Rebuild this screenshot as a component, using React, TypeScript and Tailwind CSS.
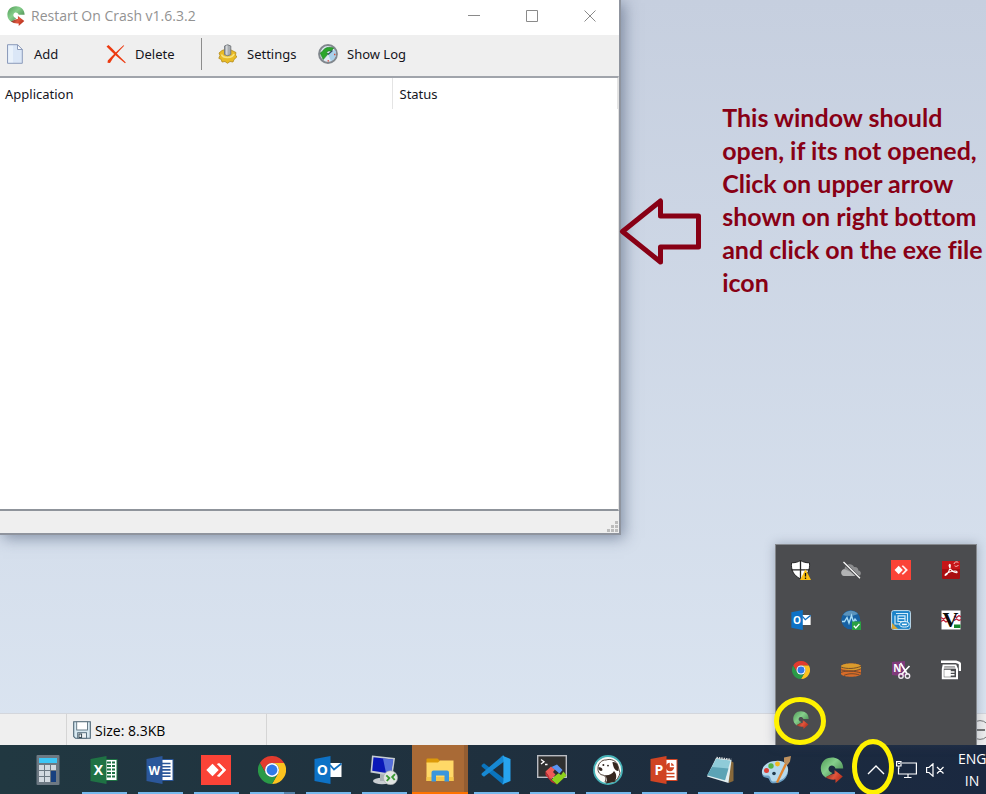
import React from "react";

type IconProps = { size?: number };

const sans = "font-['Open_Sans','Noto_Sans',sans-serif]";
const tahoma = "font-['Noto_Sans','Open_Sans',sans-serif]";

function RestartIcon({ size = 20 }: IconProps) {
  return (
    <svg width={size} height={size} viewBox="0 0 26 26" aria-hidden="true">
      <defs>
        <linearGradient id="rg" x1="0" y1="0" x2="1" y2="0.9">
          <stop offset="0" stopColor="#4f9a55" />
          <stop offset="0.45" stopColor="#86cf8c" />
          <stop offset="1" stopColor="#3b7d44" />
        </linearGradient>
        <linearGradient id="rr" x1="0" y1="0" x2="1" y2="0.5">
          <stop offset="0" stopColor="#4d2a20" />
          <stop offset="0.6" stopColor="#e2553c" />
          <stop offset="1" stopColor="#b8321e" />
        </linearGradient>
      </defs>
      <path d="M24.2 11.5 C24.2 4.5 19 0.4 13 0.4 C6 0.4 1.8 5.5 1.8 11.5 C1.8 15.5 3.8 18.8 7 20.8 L13.5 16 C10 14.8 9 12.6 9.8 10.6 C10.8 8 15 7.6 16.5 11.5 Z" fill="url(#rg)" />
      <path d="M6.5 20.2 C9.5 18.5 12.5 17 15.5 16.8 V13 L23.8 19.6 L16.5 26 V22.6 C12 23 9 22 6.5 20.2 Z" fill="url(#rr)" />
    </svg>
  );
}

function ChromeIcon({ size = 28 }: IconProps) {
  const sector = "M3.2 12 A24 24 0 0 1 44.8 12 H24 A12 12 0 0 0 13.6 30 Z";
  return (
    <svg width={size} height={size} viewBox="0 0 48 48" aria-hidden="true">
      <path d={sector} fill="#e23b2e" />
      <path d={sector} fill="#fcc31e" transform="rotate(120 24 24)" />
      <path d={sector} fill="#2a9a47" transform="rotate(240 24 24)" />
      <circle cx="24" cy="24" r="12" fill="#fff" />
      <circle cx="24" cy="24" r="9.3" fill="#3079e8" />
    </svg>
  );
}

function AnyDeskIcon({ size = 30 }: IconProps) {
  return (
    <svg width={size} height={size} viewBox="0 0 30 30" aria-hidden="true">
      <rect width="30" height="30" fill="#fb4337" />
      <path d="M11.5 8.8 L17.7 15 L11.5 21.2 L5.3 15 Z" fill="#fff" />
      <path d="M16.4 9 L18.4 8.6 L24.8 15 L18.4 21.4 L16.4 21 L22 15 Z" fill="#fff" stroke="#fff" strokeWidth="0.8" />
    </svg>
  );
}

function OutlookIcon({ size = 28 }: IconProps) {
  return (
    <svg width={size} height={size} viewBox="0 0 28 28" aria-hidden="true">
      <path d="M15 7 H27.5 V21 H15 Z" fill="#fff" />
      <path d="M16 9 L20 13.5 L27.5 7.5" fill="none" stroke="#0f6fc2" strokeWidth="1.8" />
      <path d="M0.5 3 L16.5 0 V28 L0.5 25 Z" fill="#0d72c6" />
      <text x="8.3" y="19.2" fontSize="14" fontWeight="700" fill="#fff" textAnchor="middle" fontFamily="Open Sans, sans-serif">O</text>
    </svg>
  );
}

function CalculatorIcon() {
  return (
    <svg width="24" height="30" viewBox="0 0 24 30" aria-hidden="true">
      <rect x="0.5" width="23" height="30" rx="1" fill="#6d7983" />
      <rect x="3" y="3" width="18" height="5" fill="#3dc6f5" />
      <g fill="#d3dae1">
        <rect x="3" y="10" width="5" height="5" /><rect x="9" y="10" width="5" height="5" /><rect x="15" y="10" width="5" height="5" />
        <rect x="3" y="16" width="5" height="5" /><rect x="9" y="16" width="5" height="5" />
        <rect x="3" y="22" width="5" height="5" /><rect x="9" y="22" width="5" height="5" />
      </g>
      <rect x="15" y="16" width="5" height="11" fill="#17407f" />
    </svg>
  );
}

function ExcelIcon() {
  return (
    <svg width="28" height="28" viewBox="0 0 28 28" aria-hidden="true">
      <rect x="15" y="3.5" width="12" height="21" fill="#fff" stroke="#1f7244" />
      <path d="M17 6.5 H25 M17 10 H25 M17 13.5 H25 M17 17 H25 M17 20.5 H25" stroke="#1f7244" strokeWidth="2.2" />
      <path d="M21.5 4 V24" stroke="#fff" />
      <path d="M0.5 3 L16.5 0 V28 L0.5 25 Z" fill="#1f7244" />
      <text x="8.5" y="19.3" fontSize="14" fontWeight="700" fill="#fff" textAnchor="middle" fontFamily="Open Sans, sans-serif">X</text>
    </svg>
  );
}

function WordIcon() {
  return (
    <svg width="28" height="28" viewBox="0 0 28 28" aria-hidden="true">
      <rect x="15" y="3.5" width="12" height="21" fill="#fff" stroke="#2b579a" />
      <path d="M16 7.5 H24.5 M16 10.7 H24.5 M16 13.9 H24.5 M16 17.1 H24.5 M16 20.3 H24.5" stroke="#2b579a" strokeWidth="1.6" />
      <path d="M0.5 3 L16.5 0 V28 L0.5 25 Z" fill="#2b579a" />
      <text x="8.3" y="18.6" fontSize="12" fontWeight="700" fill="#fff" textAnchor="middle" fontFamily="Open Sans, sans-serif">W</text>
    </svg>
  );
}

function PowerPointIcon() {
  return (
    <svg width="28" height="28" viewBox="0 0 28 28" aria-hidden="true">
      <rect x="15" y="3.5" width="12" height="21" fill="#fff" stroke="#d24625" />
      <circle cx="20" cy="11" r="4.2" fill="#d24625" />
      <path d="M20.5 6 V10.5 H25" stroke="#fff" strokeWidth="1.4" fill="none" />
      <path d="M16 17.5 H24.5 M16 20.7 H24.5" stroke="#d24625" strokeWidth="1.6" />
      <path d="M0.5 3 L16.5 0 V28 L0.5 25 Z" fill="#d04423" />
      <text x="9" y="19.2" fontSize="14" fontWeight="700" fill="#fff" textAnchor="middle" fontFamily="Open Sans, sans-serif">P</text>
    </svg>
  );
}

function RemoteDesktopIcon() {
  return (
    <svg width="30" height="30" viewBox="0 0 30 30" aria-hidden="true">
      <ellipse cx="13" cy="26" rx="9" ry="3.2" fill="#c9ced2" />
      <path d="M11 19 H18 V26 H11 Z" fill="#a9b0b6" />
      <path d="M3 0.5 L26 3 L23.5 21 L1.5 17.5 Z" fill="#c6cdd3" />
      <path d="M4.5 2.2 L24.2 4.6 L22 18.8 L3.2 15.8 Z" fill="#0a18b8" />
      <path d="M14 3.4 L24.2 4.6 L22 18.8 L17 18 Z" fill="#6f8ce6" opacity="0.75" />
      <circle cx="21.5" cy="22.8" r="7" fill="#e2e5e4" stroke="#a7adad" strokeWidth="0.6" />
      <path d="M17.3 20.4 L20.3 23 L17.8 26 M26 19.2 L23.2 22 L25.7 25" fill="none" stroke="#3a9a32" strokeWidth="1.9" />
    </svg>
  );
}

function ExplorerIcon() {
  return (
    <svg width="28" height="24" viewBox="0 0 28 24" aria-hidden="true">
      <path d="M0.5 1.5 Q0.5 0.5 1.5 0.5 H11.5 L13.5 2.5 V6 H0.5 Z" fill="#dd9a09" />
      <path d="M0.5 4.5 H12 L14 2.5 H27.5 V23 H0.5 Z" fill="#ffd867" />
      <path d="M0.5 19 H27.5 V23 H0.5 Z" fill="#f5c64b" />
      <path d="M5.5 23.5 V14.5 Q5.5 12.5 7.5 12.5 H21 Q23 12.5 23 14.5 V23.5 H18.5 V17.5 H10 V23.5 Z" fill="#3a96dd" />
    </svg>
  );
}

function VsCodeIcon() {
  return (
    <svg width="30" height="30" viewBox="0 0 30 30" aria-hidden="true">
      <path d="M0.6 10 L3 8.2 L23 23.4 V29.8 L21 28.8 L0.6 11.5 Z" fill="#0a74bd" />
      <path d="M0.6 20 L3 21.8 L23 6.6 V0.2 L21 1.2 L0.6 18.5 Z" fill="#1789d3" />
      <path d="M21 0.5 L29.5 4 V26 L21 29.5 Q22.4 28.6 22.4 26 V4 Q22.4 1.4 21 0.5 Z" fill="#27a4ef" />
    </svg>
  );
}

function TerminalIcon() {
  return (
    <svg width="30" height="30" viewBox="0 0 30 30" aria-hidden="true">
      <rect x="0.7" y="0.7" width="28.6" height="21.6" fill="#2f3030" stroke="#b9bcc2" strokeWidth="1.4" />
      <path d="M4 4.5 L7 6.7 L4 9 M8 9.5 H10.5" stroke="#fff" strokeWidth="1.3" fill="none" />
      <path d="M8.5 16.5 L14 11.5 L18 14.5 L16 17 L18.5 19.5 L14 24.5 Z" fill="#ef5b57" />
      <path d="M14.5 12 L20 9.5 L25.5 15 L22.5 18.5 L19.5 16 Z" fill="#5a93ee" />
      <path d="M18 21 L21.5 18.2 L24 20 L26.5 16.5 L29.5 20.5 L20 29.5 L14.5 24.8 Z" fill="#8ed11c" />
      <path d="M8.5 16.5 L14 24.5 L20 29.5 L14.5 27 L8.5 20 Z" fill="#c62f35" />
    </svg>
  );
}

function DBeaverIcon() {
  return (
    <svg width="30" height="30" viewBox="0 0 30 30" aria-hidden="true">
      <circle cx="15" cy="15" r="14" fill="#fbfaf7" stroke="#47b3b8" strokeWidth="1.8" />
      <path d="M5 13 C5 8.5 9 4.6 13 5 C18 3.2 24 6 25 11 L27 18 C26 22 24 25 21 27 L19.5 20.5 L17.5 27 H12 C13 24.5 13.5 22 11 20.4 L8 19.6 C6 18 4.6 16.5 5 13 Z" fill="#fff" stroke="#433229" strokeWidth="0.9" />
      <path d="M19.5 7 C24 6.5 26 11 25.4 16 C22.5 16.5 20 12.5 19.5 7 Z M5.4 12.6 C7.5 11.8 9.8 13 9.4 15.2 C8.4 16.8 5.4 15.8 5.4 12.6 Z M11 20 C15.5 20.8 19.5 19 21 16 C24 19 24 24 21 27 L13 28.4 C14.5 25 14 22.2 11 20 Z" fill="#35261f" />
      <circle cx="10.4" cy="10" r="1" fill="#2b201b" />
      <circle cx="15" cy="10.6" r="0.9" fill="#2b201b" />
    </svg>
  );
}

function NotepadIcon() {
  return (
    <svg width="28" height="28" viewBox="0 0 28 28" aria-hidden="true">
      <path d="M23 4 L27.5 6.5 V25 L22.5 27 Z" fill="#87683a" />
      <path d="M10 2 L25.5 4 L22.5 27 L1 20.5 Z" fill="#e3eef0" />
      <path d="M10.2 2.8 L24.5 4.6 L19 24.3 L1.2 19.2 Z" fill="#8fcbd8" />
      <path d="M6 11 L22.5 12.5 L19 24.3 L1.2 19.2 Z" fill="#4b95aa" opacity="0.75" />
      <path d="M10.5 1.7 L25.2 3.6" stroke="#d6dadb" strokeWidth="2" strokeDasharray="1.4 1" />
    </svg>
  );
}

function PaintIcon() {
  return (
    <svg width="30" height="28" viewBox="0 0 30 28" aria-hidden="true">
      <path d="M1 17 C0 10 8 4.5 15 5 C23 4 28 9 27 15 C26.5 21 21 26.5 13 26.5 C8 26.5 9.5 22 7.5 21 C5.5 20 1.6 21 1 17 Z" fill="#b6d9ec" />
      <path d="M1.2 18 C3 21 6.5 18.5 8.5 20.2 C10.2 22 9 25.5 13 25.5 C20 25.5 25.5 21 26.8 16 C26.5 22 21 27.3 13 27.3 C8 27.3 9 23 7.2 22.2 C5 21.2 1.6 22 1.2 18 Z" fill="#6c9fc3" />
      <circle cx="5.5" cy="14.5" r="2.5" fill="#dd3f35" />
      <circle cx="10" cy="10" r="2.7" fill="#53b346" />
      <circle cx="16.5" cy="8" r="2.4" fill="#f2b81f" />
      <circle cx="13" cy="17.5" r="1.8" fill="#223b4e" />
      <path d="M24 7 L26 8.5 L17 27 L15 26 Z" fill="#e2862f" />
      <path d="M23 1.5 L30 0 L29 5.5 L26.5 9 L23 6.5 Z" fill="#bd905e" />
    </svg>
  );
}

function ShieldIcon() {
  return (
    <svg width="20" height="20" viewBox="0 0 20 20" aria-hidden="true">
      <path d="M9.5 0.5 C12 2.2 15 2.8 18.5 2.8 C19 10 17 15 9.5 19 C2 15 0 10 0.5 2.8 C4 2.8 7 2.2 9.5 0.5 Z" fill="#fff" stroke="#191919" strokeWidth="0.9" />
      <path d="M9.5 0.5 V19 M0.5 9.8 H18.5" stroke="#222" strokeWidth="1.3" />
      <path d="M14.5 9.2 L20 20 H9 Z" fill="#fbc012" />
      <path d="M14.5 13 V16.6 M14.5 17.6 V19" stroke="#111" strokeWidth="1.3" />
    </svg>
  );
}

function CloudOffIcon() {
  return (
    <svg width="20" height="20" viewBox="0 0 20 20" aria-hidden="true">
      <path d="M3.5 16 C-1 15.5 -0.5 9.5 3.5 9.3 C4 4 11 2.5 13 7 C16 6.5 17.5 8.5 17.3 10.5 C21 11 20.5 16 17 16 Z" fill="#8c8d8f" />
      <path d="M3.5 16 C-1 15.5 -0.5 9.5 3.5 9.3 L10 12 L17 16 Z" fill="#b2b3b4" />
      <path d="M2.5 2.5 L18.5 18" stroke="#4b4c4f" strokeWidth="3" />
      <path d="M2.5 2 L19 18.2" stroke="#fff" strokeWidth="1.2" />
    </svg>
  );
}

function AcrobatIcon() {
  return (
    <svg width="20" height="20" viewBox="0 0 20 20" aria-hidden="true">
      <rect x="1" y="1" width="18" height="18" rx="1.5" fill="#a90d10" />
      <path d="M1 1 H19 V9 H1 Z" fill="#c61518" />
      <path d="M4.5 15.3 C6.5 14.5 9.5 9 9.3 5.5 C9.2 3.8 7.9 4.2 8.1 5.8 C8.5 9 12 12.5 15.2 12.7 C17 12.5 16 11 14 11 C10.5 11 7 12.3 5 13.8 C3.8 14.8 3.8 15.6 4.5 15.3 Z" fill="none" stroke="#fff" strokeWidth="1.1" />
      <path d="M13 4 A2.6 2.6 0 0 1 17.4 2.6 M17.5 5 A2.6 2.6 0 0 1 13.6 5.8" stroke="#f7c5c5" fill="none" />
    </svg>
  );
}

function MonitorPulseIcon() {
  return (
    <svg width="20" height="20" viewBox="0 0 20 20" aria-hidden="true">
      <circle cx="9.7" cy="9.7" r="9.5" fill="#1761a3" />
      <path d="M2 5 A9.5 9.5 0 0 1 17 4 C12 6 7 6.5 2 5 Z" fill="#5b94bd" />
      <path d="M1 11.5 H3.5 L6 7.5 L8 13 L10.5 5.5 L12.5 12 L14 9 L15.5 11" fill="none" stroke="#a6dcf7" strokeWidth="1.4" />
      <rect x="11" y="11.5" width="9" height="8.5" fill="#2aa043" />
      <path d="M12.8 15.7 L14.8 18 L18.4 13.8" stroke="#fff" strokeWidth="1.3" fill="none" />
    </svg>
  );
}

function IntelIcon() {
  return (
    <svg width="20" height="20" viewBox="0 0 20 20" aria-hidden="true">
      <rect x="0.6" y="0.6" width="18.8" height="18.8" rx="2" fill="#1b83c8" stroke="#c3dff0" />
      <path d="M1 13 L7 19 H1 Z" fill="#d7a738" />
      <path d="M5 3.5 H16.5 V13 M4 5.5 V14 H10 M7 5.8 H14 V11.5 H7 Z M7 8.6 H14" stroke="#d3edfb" fill="none" strokeWidth="1.2" />
      <ellipse cx="13.4" cy="14.3" rx="4.8" ry="2.8" fill="#2d91d1" stroke="#e4f4fc" />
      <path d="M11 14.4 H15.8" stroke="#fff" strokeWidth="1.4" />
    </svg>
  );
}

function VIcon() {
  return (
    <svg width="20" height="20" viewBox="0 0 20 20" aria-hidden="true">
      <rect x="0.5" y="0.5" width="19" height="19" fill="#fff" />
      <path d="M0 7.5 L2.5 9 L5 7.5 L7 9 M0 11.5 L2.5 10 L5 12 L7 11 M13 6 L15.5 7.5 L18 5.5 L20 7 M13 10.5 L15.5 9 L18 10.5 L20 9.5" stroke="#c0203a" strokeWidth="1.3" fill="none" />
      <rect x="13" y="14.5" width="6.5" height="3.5" fill="#14872c" />
      <text x="9.5" y="17" fontSize="22" fontWeight="700" textAnchor="middle" fill="#0b0b0b" fontFamily="Liberation Serif, serif">V</text>
    </svg>
  );
}

function StackIcon() {
  return (
    <svg width="20" height="20" viewBox="0 0 20 20" aria-hidden="true">
      <path d="M0 6 C2 2.5 18 2.5 20 6 V14 C18 17.7 2 17.7 0 14 Z" fill="#d96c28" />
      <path d="M0 6 C2 2.5 18 2.5 20 6 V9 C14 11 6 10.5 0 8 Z" fill="#d99b2c" />
      <path d="M0 7 C6 9.3 14 8.8 20 6.3 M0 9.8 C6 12 14 11.5 20 8.8 M0 12.4 C6 10 14 11 20 13 M3 15.4 C8 13 14 13.5 18.5 15" stroke="#68452c" strokeWidth="0.9" fill="none" />
    </svg>
  );
}

function OneNoteClipIcon() {
  return (
    <svg width="20" height="20" viewBox="0 0 20 20" aria-hidden="true">
      <path d="M1 2 L14 1 V16.5 L1 15 Z" fill="#80397b" />
      <text x="6.2" y="12.3" fontSize="10" fontWeight="700" textAnchor="middle" fill="#fff" fontFamily="Open Sans, sans-serif">N</text>
      <path d="M9.5 3 L16.5 14.5 M18.5 6 L10.5 14.5" stroke="#fff" strokeWidth="1.7" />
      <circle cx="10" cy="16" r="2.2" fill="none" stroke="#f1e9f1" strokeWidth="1.4" />
      <circle cx="16.5" cy="16" r="2.2" fill="none" stroke="#f1e9f1" strokeWidth="1.4" />
    </svg>
  );
}

function CoffeeIcon() {
  return (
    <svg width="20" height="20" viewBox="0 0 20 20" aria-hidden="true">
      <path d="M0 1.8 H15 L18 2.8 Q19 3.5 19 5 V11" fill="none" stroke="#fff" strokeWidth="2.4" />
      <path d="M2.5 5.5 H14.5 L16 9 V18.2 H1.8 V9 Z" fill="#4b4c4f" stroke="#fff" strokeWidth="2" />
      <path d="M3 8 H15" stroke="#fff" strokeWidth="1.2" />
      <path d="M4 10.5 H9 V16 H4 Z M9 12 H13.5 M9 14.7 H13.5" stroke="#fff" strokeWidth="1.5" fill="#fff" />
    </svg>
  );
}

function PageIcon() {
  return (
    <svg width="20" height="20" viewBox="0 0 20 20" aria-hidden="true">
      <path d="M2.5 0.7 H12.5 L17.3 5.5 V19.3 H2.5 Z" fill="#dbe7f7" stroke="#8d9cbb" />
      <path d="M3.5 1.7 H8 V18.3 H3.5 Z" fill="#eaf2fb" />
      <path d="M12.5 0.7 V5.5 H17.3 Z" fill="#fff" stroke="#8d9cbb" />
    </svg>
  );
}

function DeleteIcon() {
  return (
    <svg width="20" height="20" viewBox="0 0 20 20" aria-hidden="true">
      <path d="M0.5 2.5 L2.5 1 C8 6 13.5 12.5 19.8 18.5 L19 19.2 C12 13.5 6 8.5 0.5 2.5 Z" fill="#ec3a10" />
      <path d="M17.5 1.2 L18.2 1.8 C12 8 7.5 13 4 19 L1.5 18.8 L1.8 16.5 C6.5 11.5 11.5 6.5 17.5 1.2 Z" fill="#ec3a10" />
    </svg>
  );
}

function SettingsIcon() {
  return (
    <svg width="20" height="20" viewBox="0 0 20 20" aria-hidden="true">
      <path d="M1 9 L4 6.5 L7 5.5 H12 L15 7 L18 8.5 L17.5 11 L18.8 13 L16 15.5 L15 18 L12 17.5 L9.5 19.3 L7 17.5 L4 18 L3.3 15.5 L0.8 14.3 L2 11.5 Z" fill="#e9bb25" stroke="#b48a18" strokeWidth="0.8" />
      <path d="M3.5 10.5 C5 14.5 14 14.5 16 10" stroke="#f8e27a" strokeWidth="1.8" fill="none" />
      <path d="M6.5 2 Q9.5 -0.5 12.8 2 V10.5 Q9.7 13 6.5 10.5 Z" fill="#aaaeb3" stroke="#74787d" strokeWidth="0.9" />
      <path d="M8.8 1.5 V10.8" stroke="#dadde0" strokeWidth="1.3" />
    </svg>
  );
}

function LogIcon() {
  return (
    <svg width="20" height="20" viewBox="0 0 20 20" aria-hidden="true">
      <circle cx="10" cy="10" r="8.9" fill="#dfeaf3" stroke="#81878d" strokeWidth="2" />
      <path d="M10 10 L16.8 5.5 A8 8 0 0 1 13 17.2 Z" fill="#a9d0ea" />
      <path d="M2.2 9 L4.2 7.6 C6.5 3.6 11 2.2 15.6 4.2 L13 7.2 C10.8 6.6 9.2 7.2 8.4 8.8 L10.4 9.6 L5.2 15.6 Z" fill="#2aa62c" stroke="#1b7a20" strokeWidth="0.6" />
      <path d="M10 10.5 L14.5 6.5" stroke="#344c5f" strokeWidth="1.1" />
      <path d="M9.5 16.8 H11 M16 10.5 H17.4" stroke="#d94a36" strokeWidth="1.3" />
    </svg>
  );
}

function DiskIcon() {
  return (
    <svg width="18" height="18" viewBox="0 0 18 18" aria-hidden="true">
      <path d="M0.7 0.7 H17.3 V17.3 H2.5 L0.7 15.5 Z" fill="#d8e9f1" stroke="#4e6675" strokeWidth="1.1" />
      <rect x="3.7" y="0.8" width="10.8" height="8.2" fill="#fff" stroke="#5c707c" strokeWidth="0.9" />
      <rect x="4.7" y="11.7" width="8.8" height="5.5" fill="#edf1f3" stroke="#4e6675" strokeWidth="0.9" />
      <rect x="6" y="13" width="2.6" height="3.5" fill="none" stroke="#2b3f4b" strokeWidth="0.9" />
    </svg>
  );
}

const toolbarText = `text-[13px] leading-5 text-[#15151d] ${tahoma}`;

function ToolButton({ icon, label, className }: { icon: React.ReactNode; label: string; className: string }) {
  return (
    <button type="button" className={`flex h-9 items-center gap-[9px] whitespace-nowrap ${toolbarText} ${className}`}>
      {icon}
      {label}
    </button>
  );
}

function CaptionButton({ label, d }: { label: string; d: string }) {
  return (
    <button type="button" aria-label={label} className="flex h-8 w-[58px] items-center justify-center">
      <svg width="12" height="12" viewBox="0 0 12 12" fill="none" stroke="#8a8a8a" aria-hidden="true">
        <path d={d} />
      </svg>
    </button>
  );
}

function AppWindow() {
  return (
    <section
      aria-label="Restart On Crash"
      className="relative w-[63%] shrink-0 self-start border-r-2 border-b-2 border-[#8f949e] bg-[#efefef] shadow-[3px_3px_14px_rgba(50,65,95,0.5)]"
    >
      <header className="flex h-[35px] items-start bg-white">
        <div className="flex h-8 items-center gap-[5px] pl-[6px]">
          <RestartIcon />
          <h1 className={`text-[14px] leading-5 text-[#929292] ${sans}`}>Restart On Crash v1.6.3.2</h1>
        </div>
        <div className="ml-auto flex">
          <CaptionButton label="Minimize" d="M0 5.5 H12" />
          <CaptionButton label="Maximize" d="M0.5 0.5 H11.5 V11.5 H0.5 Z" />
          <CaptionButton label="Close" d="M0.5 0.5 L11.5 11.5 M11.5 0.5 L0.5 11.5" />
        </div>
      </header>
      <div role="toolbar" className="flex h-[41px] items-start pt-px pl-[5px]">
        <ToolButton icon={<PageIcon />} label="Add" className="w-[101px]" />
        <ToolButton icon={<DeleteIcon />} label="Delete" className="w-[95px]" />
        <div className="mt-0.5 mr-4 h-8 w-px bg-[#8d8d8d]" />
        <ToolButton icon={<SettingsIcon />} label="Settings" className="w-[100px]" />
        <ToolButton icon={<LogIcon />} label="Show Log" className="" />
      </div>
      <div className="h-[435px] border-t-2 border-r border-b-2 border-t-[#a0a4ab] border-r-[#e2e2e2] border-b-[#8f949b] bg-white">
        <table className={`w-full table-fixed border-collapse text-left ${toolbarText}`}>
          <thead>
            <tr className="h-[31px]">
              <th scope="col" className="w-[392px] border-r border-[#e4e4e4] p-0 pl-[5px] font-normal">Application</th>
              <th scope="col" className="border-r border-[#e4e4e4] p-0 pl-[7px] font-normal">Status</th>
            </tr>
          </thead>
          <tbody />
        </table>
      </div>
      <footer className="flex h-[22px] items-end justify-end">
        <svg width="12" height="12" viewBox="0 0 12 12" fill="#bcbcbc" aria-hidden="true">
          <path d="M8 0h3v3h-3z M8 4h3v3h-3z M4 4h3v3h-3z M8 8h3v3h-3z M4 8h3v3h-3z M0 8h3v3h-3z" />
        </svg>
      </footer>
    </section>
  );
}

function Annotation() {
  return (
    <aside className="relative flex flex-1 items-start gap-[19px]">
      <svg width="82" height="70" viewBox="0 0 82 70" className="mt-[196px] shrink-0 overflow-visible" aria-hidden="true">
        <path d="M1.5 35.5 L39.5 5 V20 H77.5 V51 H39.5 V66 Z" fill="none" stroke="#880015" strokeWidth="5" strokeLinejoin="round" />
      </svg>
      <p className="mt-[101px] text-[25px] leading-[33px] font-bold whitespace-nowrap text-[#880015] [font-variant-ligatures:none] font-['Lato','Open_Sans',sans-serif]">
        This window should
        <br />
        open, if its not opened,
        <br />
        Click on upper arrow
        <br />
        shown on right bottom
        <br />
        and click on the exe file
        <br />
        icon
      </p>
    </aside>
  );
}

const trayItems: { name: string; icon: React.ReactNode }[] = [
  { name: "Windows Security", icon: <ShieldIcon /> },
  { name: "OneDrive", icon: <CloudOffIcon /> },
  { name: "AnyDesk", icon: <AnyDeskIcon size={20} /> },
  { name: "Acrobat", icon: <AcrobatIcon /> },
  { name: "Outlook", icon: <OutlookIcon size={20} /> },
  { name: "System monitor", icon: <MonitorPulseIcon /> },
  { name: "Intel Graphics", icon: <IntelIcon /> },
  { name: "V", icon: <VIcon /> },
  { name: "Chrome", icon: <ChromeIcon size={18} /> },
  { name: "Database", icon: <StackIcon /> },
  { name: "OneNote Clipper", icon: <OneNoteClipIcon /> },
  { name: "Caffeine", icon: <CoffeeIcon /> },
];

function TrayPopup() {
  return (
    <div className="absolute right-[9px] bottom-0 grid grid-cols-4 border border-b-0 border-[#85888d] bg-[#4b4c4f] shadow-[0_0_10px_rgba(60,75,100,0.35)]">
      {trayItems.map((item) => (
        <button key={item.name} type="button" aria-label={item.name} className="flex size-[50px] items-center justify-center">
          {item.icon}
        </button>
      ))}
      <button type="button" aria-label="Restart On Crash" className="relative flex size-[50px] items-center justify-center">
        <RestartIcon size={18} />
        <svg width="52" height="48" viewBox="0 0 52 48" className="absolute top-0.5 -left-0.5 z-10" aria-hidden="true">
          <ellipse cx="26" cy="24" rx="23.5" ry="21.5" fill="none" stroke="#fff200" strokeWidth="5" />
        </svg>
      </button>
    </div>
  );
}

type Task = { name: string; icon: React.ReactNode; state: "idle" | "open" | "stacked" | "active" };

const tasks: Task[] = [
  { name: "Calculator", icon: <CalculatorIcon />, state: "idle" },
  { name: "Excel", icon: <ExcelIcon />, state: "open" },
  { name: "Word", icon: <WordIcon />, state: "open" },
  { name: "AnyDesk", icon: <AnyDeskIcon />, state: "open" },
  { name: "Chrome", icon: <ChromeIcon />, state: "stacked" },
  { name: "Outlook", icon: <OutlookIcon />, state: "open" },
  { name: "Remote Desktop", icon: <RemoteDesktopIcon />, state: "open" },
  { name: "File Explorer", icon: <ExplorerIcon />, state: "active" },
  { name: "Visual Studio Code", icon: <VsCodeIcon />, state: "open" },
  { name: "Terminal", icon: <TerminalIcon />, state: "open" },
  { name: "DBeaver", icon: <DBeaverIcon />, state: "open" },
  { name: "PowerPoint", icon: <PowerPointIcon />, state: "open" },
  { name: "Notepad", icon: <NotepadIcon />, state: "open" },
  { name: "Paint", icon: <PaintIcon />, state: "open" },
  { name: "Restart On Crash", icon: <RestartIcon size={26} />, state: "open" },
];

const underline = {
  idle: "w-[45px]",
  open: "w-[45px] bg-[#76b9ed]",
  stacked: "w-[45px] border-r-[11px] border-[#5583ab] bg-[#76b9ed]",
  active: "w-full bg-[#ff7300]",
};

function TaskButton({ task }: { task: Task }) {
  return (
    <button
      type="button"
      aria-label={task.name}
      className={`flex w-14 flex-col items-center ${task.state === "active" ? "bg-[#a96a36] shadow-[inset_-4px_0_0_#935d32]" : ""}`}
    >
      <span className="flex flex-1 items-center pt-0.5">{task.icon}</span>
      <span className={`h-0.5 ${underline[task.state]}`} />
    </button>
  );
}

function Taskbar() {
  return (
    <footer className="flex h-[49px] shrink-0 overflow-hidden bg-linear-to-r from-[#213841] via-[#1f303e] to-[#1a2840] pl-5">
      {tasks.map((task) => (
        <TaskButton key={task.name} task={task} />
      ))}
      <div className="ml-auto flex shrink-0 items-center text-white">
        <button type="button" aria-label="Show hidden icons" className="relative flex h-full w-8 items-center justify-center">
          <svg width="18" height="10" viewBox="0 0 18 10" fill="none" stroke="#fff" strokeWidth="1.4" aria-hidden="true">
            <path d="M1 9 L9 1 L17 9" />
          </svg>
        </button>
        <button type="button" aria-label="Network" className="flex h-full w-7 items-center justify-center">
          <svg width="21" height="18" viewBox="0 0 21 18" fill="none" stroke="#fff" strokeWidth="1.2" aria-hidden="true">
            <path d="M6 2 H20.4 V13 H2.5 V7 M12 13 V16.5 M8 16.5 H15.5" />
            <path d="M0.6 0.6 H5 V5 H0.6 Z M2.8 5 V8 M2 2.5 H4" />
          </svg>
        </button>
        <button type="button" aria-label="Volume muted" className="flex h-full w-[30px] items-center justify-center">
          <svg width="19" height="14" viewBox="0 0 19 14" fill="none" stroke="#fff" strokeWidth="1.2" aria-hidden="true">
            <path d="M0.6 4.5 H3 L7 0.8 V13.2 L3 9.5 H0.6 Z M11 4 L17.5 10.5 M17.5 4 L11 10.5" />
          </svg>
        </button>
        <button type="button" className={`ml-2 w-7 text-center text-[14px] leading-[22px] ${sans}`}>
          ENG
          <br />
          IN
        </button>
      </div>
    </footer>
  );
}

function StatusBar() {
  return (
    <div className={`flex h-8 shrink-0 items-center overflow-hidden border-t border-[#d3d6dc] bg-[#efefef] text-[14px] leading-5 text-black ${sans}`}>
      <div className="h-full w-[67px] border-r border-[#d5d5d5]" />
      <div className="flex h-full w-[200px] items-center gap-1 border-r border-[#d5d5d5] pl-[6px]">
        <DiskIcon />
        <span className="pt-0.5">Size: 8.3KB</span>
      </div>
      <button type="button" aria-label="Zoom out" className="-mr-1 ml-auto">
        <svg width="20" height="20" viewBox="0 0 20 20" fill="none" aria-hidden="true">
          <circle cx="10" cy="10" r="9.4" stroke="#777" />
          <path d="M5 10 H15" stroke="#444" strokeWidth="1.4" />
        </svg>
      </button>
    </div>
  );
}

export default function App() {
  return (
    <div className="relative flex h-screen flex-col overflow-hidden bg-linear-to-b from-[#c6cfdf] to-[#dce6f2]">
      <div className="relative flex flex-1 flex-col">
        <main className="flex flex-1">
          <AppWindow />
          <Annotation />
        </main>
        <StatusBar />
        <TrayPopup />
      </div>
      <Taskbar />
      <svg width="44" height="58" viewBox="0 0 44 58" className="absolute right-[91px] -bottom-0.5 z-20" aria-hidden="true">
        <ellipse cx="22" cy="29" rx="18.5" ry="25.5" fill="none" stroke="#fff200" strokeWidth="5" />
      </svg>
    </div>
  );
}
